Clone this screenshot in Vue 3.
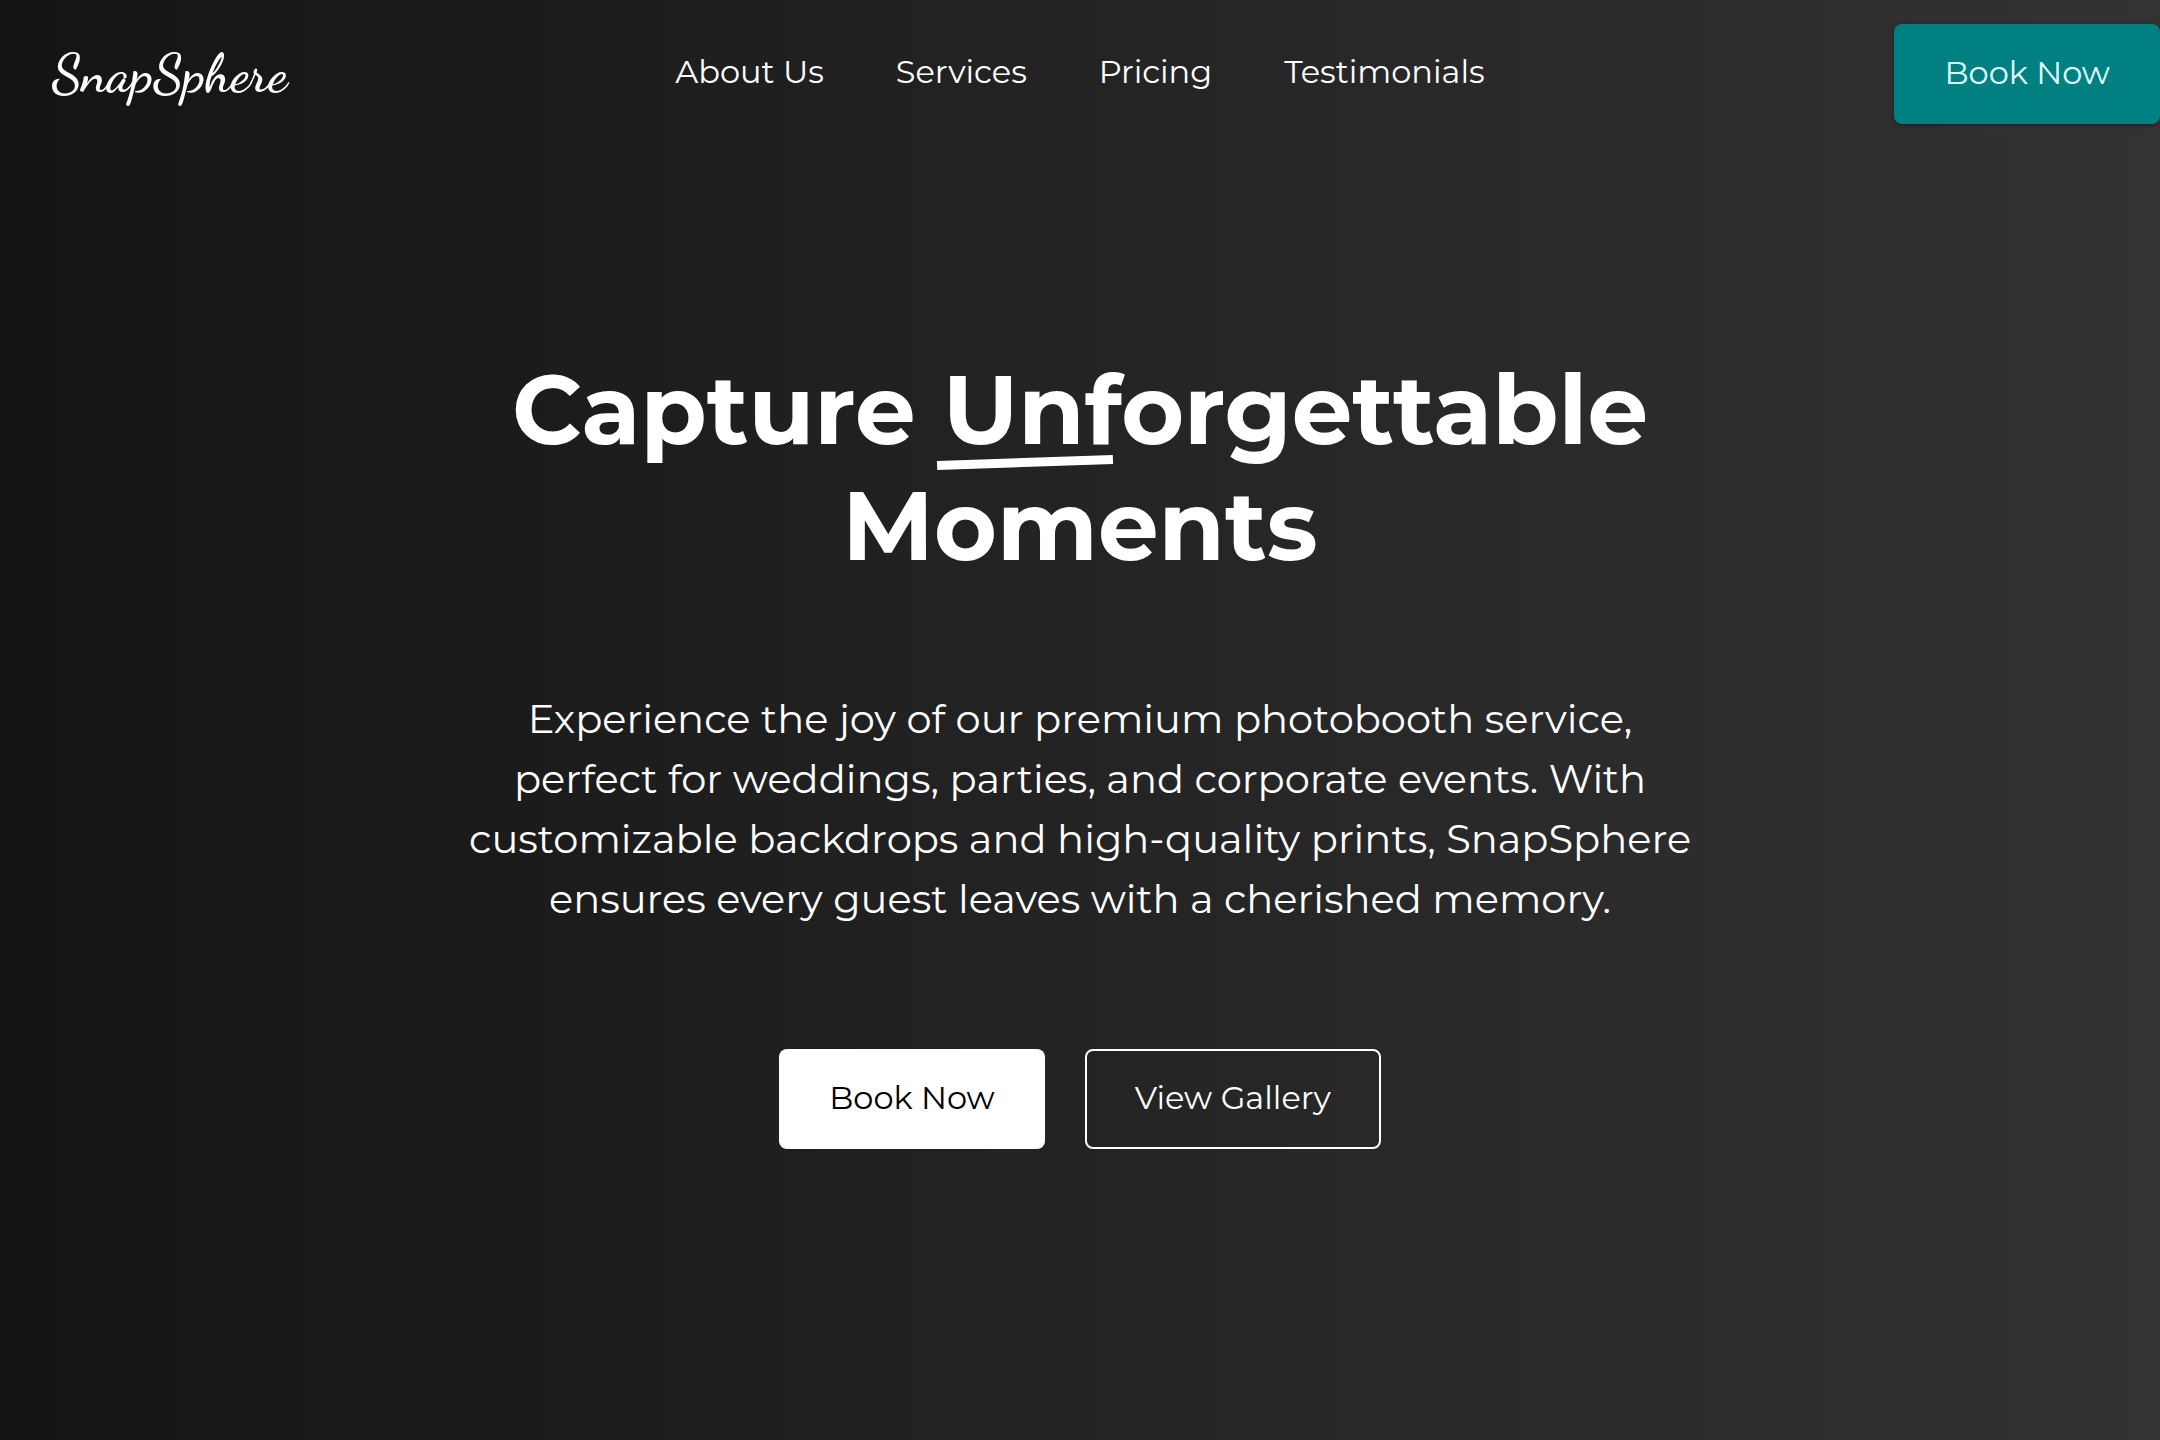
<script setup>
const links = ['About Us', 'Services', 'Pricing', 'Testimonials']
</script>

<template>
  <div class="page">
    <header class="bar">
      <a class="logo" href="#">SnapSphere</a>
      <nav class="nav" aria-label="Main">
        <a v-for="link in links" :key="link" href="#">{{ link }}</a>
      </nav>
      <div class="action">
        <button type="button" class="btn teal">Book Now</button>
      </div>
    </header>

    <main class="hero">
      <h1>Capture <span class="mark">Unforgettable</span> Moments</h1>
      <p>
        Experience the joy of our premium photobooth service,
        perfect for weddings, parties, and corporate events. With
        customizable backdrops and high-quality prints, SnapSphere
        ensures every guest leaves with a cherished memory.
      </p>
      <div class="buttons">
        <button type="button" class="btn solid">Book Now</button>
        <button type="button" class="btn outline">View Gallery</button>
      </div>
    </main>
  </div>
</template>

<style>
body {
  background: #141414;
}
</style>

<style scoped>
.page {
  box-sizing: border-box;
  min-height: 100vh;
  background: linear-gradient(to right, #141414, #333333);
  color: #fff;
  font-family: Montserrat, Inter, "Open Sans", sans-serif;
  font-size: 32px;
}

.bar {
  display: grid;
  grid-template-columns: 1fr auto 1fr;
  align-items: center;
  padding-top: 24px;
}

.logo {
  padding-left: 52px;
  color: #fff;
  font-family: "Dancing Script", "Liberation Serif", cursive;
  font-size: 54px;
  font-weight: 600;
  line-height: 60px;
  text-decoration: none;
}

.nav {
  display: flex;
  gap: 72px;
  padding-bottom: 4px;
}

.nav a {
  color: #fff;
  line-height: 40px;
  text-decoration: none;
}

.action {
  display: flex;
  justify-content: flex-end;
}

.btn {
  box-sizing: border-box;
  height: 100px;
  padding: 0 50px 4px;
  border: 0;
  border-radius: 8px;
  color: #fff;
  font: inherit;
  cursor: pointer;
}

.teal {
  background: #008080;
  color: #e0ffff;
  box-shadow: 0 1px 4px rgba(0, 0, 0, 0.4);
}

.solid {
  background: #fff;
  color: #000;
}

.outline {
  padding: 0 48px 4px;
  border: 2px solid #fff;
  background: transparent;
}

.hero {
  display: flex;
  flex-direction: column;
  align-items: center;
  padding-top: 228px;
  text-align: center;
}

h1 {
  max-width: 1240px;
  margin: 0;
  font-size: 96px;
  font-weight: 700;
  line-height: 116px;
}

.mark {
  position: relative;
}

.mark::after {
  content: "";
  position: absolute;
  left: -6px;
  bottom: 1px;
  width: 25%;
  height: 9px;
  background: #fff;
  transform: rotate(-2deg);
}

p {
  max-width: 1240px;
  margin: 105px 0 0;
  font-size: 40px;
  line-height: 60px;
}

.buttons {
  display: flex;
  gap: 40px;
  margin-top: 120px;
}
</style>
